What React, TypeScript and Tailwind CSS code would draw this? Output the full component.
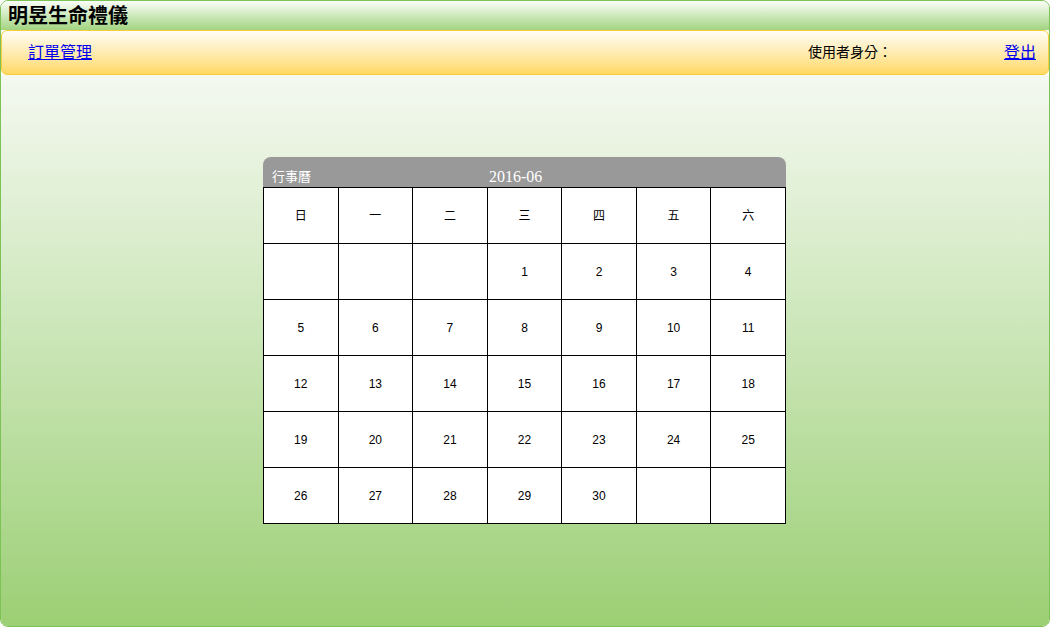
const weekDays = ['日', '一', '二', '三', '四', '五', '六']

const weeks: (number | null)[][] = [
  [null, null, null, 1, 2, 3, 4],
  [5, 6, 7, 8, 9, 10, 11],
  [12, 13, 14, 15, 16, 17, 18],
  [19, 20, 21, 22, 23, 24, 25],
  [26, 27, 28, 29, 30, null, null],
]

const cjk = "font-['Liberation_Sans','Noto_Sans_CJK_TC',sans-serif]"

function Calendar() {
  return (
    <div className="ml-[262px] w-[523px]">
      {/* header */}
      <div className="relative flex h-[30px] items-end rounded-t-lg bg-[#999999] pb-[1px] pl-[9px] text-white">
        <span className={`${cjk} text-[13px]`}>行事曆</span>
        <span className="absolute left-[226px] bottom-[2px] font-['Liberation_Serif',serif] text-[16px] leading-none">2016-06</span>
      </div>
      <table className={`w-[523px] table-fixed border-collapse bg-white ${cjk} text-[12px] text-black`}>
        <tbody>
          <tr>
            {weekDays.map((d) => (
              <td key={d} className="h-[56px] border border-black text-center">
                {d}
              </td>
            ))}
          </tr>
          {weeks.map((w, i) => (
            <tr key={i}>
              {w.map((n, j) => (
                <td key={j} className="h-[56px] border border-black text-center">
                  {n ?? ''}
                </td>
              ))}
            </tr>
          ))}
        </tbody>
      </table>
    </div>
  )
}

export default function App() {
  return (
    <div className={`flex h-[627px] w-[1050px] flex-col overflow-hidden rounded-lg border border-[#7cc254] ${cjk}`}>
      {/* title bar */}
      <div className="flex h-[29px] items-center bg-gradient-to-b from-[#fafdf8] to-[#a2d47f] pl-[7px]">
        <h1 className="text-[20px] font-bold text-black">明昱生命禮儀</h1>
      </div>

      {/* nav bar */}
      <div className="flex h-[45px] items-center rounded-md border border-[#f6cd3c] bg-gradient-to-b from-[#fffdf5] to-[#ffd962] pl-[26px] pr-[12px] text-[16px]">
        <a href="#" className="text-[#0000ee] underline">
          訂單管理
        </a>
        <span className="ml-auto mr-[112px] text-[14px] text-black">使用者身分：</span>
        <a href="#" className="text-[#0000ee] underline">
          登出
        </a>
      </div>

      {/* body */}
      <div className="flex-1 bg-gradient-to-b from-[#f5f9f1] to-[#9ccf74] pt-[82px]">
        <Calendar />
      </div>
    </div>
  )
}
